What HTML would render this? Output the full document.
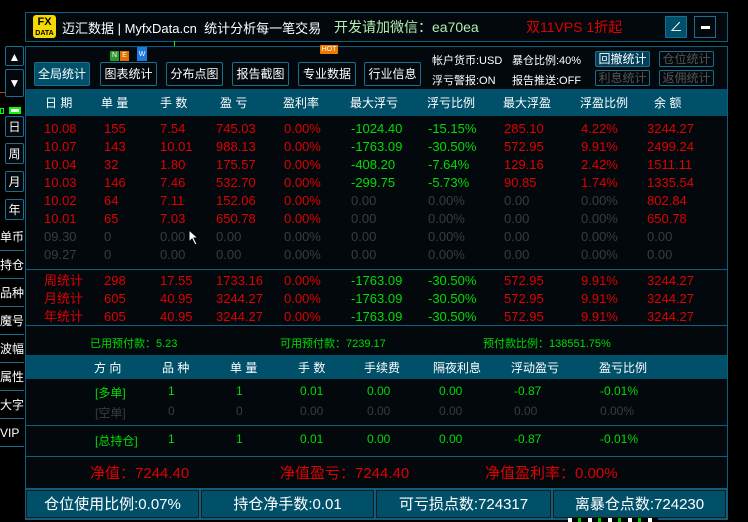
<!DOCTYPE html>
<html><head><meta charset="utf-8"><style>
*{margin:0;padding:0;box-sizing:border-box}
body{width:748px;height:522px;background:#000;position:relative;overflow:hidden;font-family:"Liberation Sans","Noto Sans CJK SC",sans-serif;color:#fff}
.a{position:absolute;white-space:nowrap}
.box{position:absolute;border:1px solid #0d5f80}
.btn{position:absolute;border:1px solid #1a6e8e;border-radius:2px;color:#fff;font-size:12px;text-align:center;line-height:22px;background:#02080c}
.r{color:#e00000}.g{color:#00dd00}.k{color:#3c3c3c}
table{border-collapse:collapse}
.t td{height:18px;line-height:18px;padding:0}
.lb{position:absolute;left:0;width:24px;font-size:12px;color:#fff;text-align:left;border-bottom:1px solid #1a6e8e;height:27px;line-height:26px}
.lbx{position:absolute;left:5px;width:19px;height:21px;border:1px solid #1a6e8e;border-radius:2px;background:#02080c;font-size:12px;text-align:center;line-height:20px}
.bb{position:absolute;top:490px;height:28px;background:#00506a;border:1px solid #1a1a1a;outline:1px solid #0d5f80;font-size:15px;line-height:27px;text-align:center}
</style></head><body>
<div class="a" style="left:0;top:92px;width:24px;height:1px;background:#d04000"></div>
<div class="a" style="left:0;top:108px;width:4px;height:6px;border:1px solid #0f0"></div>
<div class="a" style="left:9px;top:107px;width:12px;height:7px;border:2px solid #0f0;background:#fff"></div>

<div class="box" style="left:25px;top:12px;width:703px;height:30px;background:#02080c"></div>
<div class="a" style="left:33px;top:15px;width:23px;height:23px;background:#f5d800;border-radius:3px;color:#000;font-weight:bold;font-size:11px;line-height:10px;text-align:center;padding-top:2px">FX<br><span style="font-size:7px">DATA</span></div>
<div class="a" style="left:62px;top:18px;font-size:13px">迈汇数据 | MyfxData.cn&nbsp; 统计分析每一笔交易</div>
<div class="a" style="left:334px;top:17px;font-size:14px;color:#b0f0b0">开发请加微信：ea70ea</div>
<div class="a" style="left:526px;top:17px;font-size:14px;color:#e00000">双11VPS 1折起</div>
<div class="a" style="left:665px;top:16px;width:22px;height:22px;border:1px solid #1a6e8e;background:#00506a;color:#fff;font-size:13px;text-align:center;line-height:20px">∠</div>
<div class="a" style="left:694px;top:16px;width:22px;height:22px;border:1px solid #1a6e8e;background:#02080c"><div style="position:absolute;left:6px;top:9px;width:9px;height:3px;background:#fff"></div></div>
<div class="a" style="left:174px;top:41px;width:1px;height:5px;background:#0f0"></div>

<div class="box" style="left:25px;top:46px;width:703px;height:474px;background:#02080c"></div>
<div class="btn" style="left:34px;top:62px;width:56px;height:24px;background:#00506a">全局统计</div>
<div class="btn" style="left:100px;top:62px;width:57px;height:24px">图表统计</div>
<div class="btn" style="left:166px;top:62px;width:57px;height:24px">分布点图</div>
<div class="btn" style="left:232px;top:62px;width:57px;height:24px">报告截图</div>
<div class="btn" style="left:298px;top:62px;width:58px;height:24px">专业数据</div>
<div class="btn" style="left:364px;top:62px;width:57px;height:24px">行业信息</div>
<div class="a" style="left:110px;top:51px;width:9px;height:10px;background:#2a9a2a;font-size:7px;text-align:center;line-height:10px">N</div>
<div class="a" style="left:120px;top:51px;width:9px;height:10px;background:#e07000;font-size:7px;text-align:center;line-height:10px">E</div>
<div class="a" style="left:137px;top:47px;width:10px;height:14px;background:#1a7ae0;font-size:7px;text-align:center;line-height:16px">W</div>
<div class="a" style="left:320px;top:45px;width:18px;height:9px;background:#f07800;font-size:7px;text-align:center;line-height:9px;border-radius:1px">HOT</div>
<div class="a" style="left:432px;top:52px;font-size:11px">帐户货币:USD</div>
<div class="a" style="left:512px;top:52px;font-size:11px">暴仓比例:40%</div>
<div class="a" style="left:432px;top:72px;font-size:11px">浮亏警报:ON</div>
<div class="a" style="left:512px;top:72px;font-size:11px">报告推送:OFF</div>
<div class="btn" style="left:595px;top:51px;width:55px;height:16px;line-height:14px;background:#00405a">回撤统计</div>
<div class="btn" style="left:659px;top:51px;width:55px;height:16px;line-height:14px;color:#555">仓位统计</div>
<div class="btn" style="left:595px;top:70px;width:55px;height:16px;line-height:14px;color:#555">利息统计</div>
<div class="btn" style="left:659px;top:70px;width:55px;height:16px;line-height:14px;color:#555">返佣统计</div>

<div class="a" style="left:26px;top:89px;width:701px;height:27px;background:#00506a"></div>
<div class="a" style="top:94px;left:45px;font-size:12px">日 期</div>
<div class="a" style="top:94px;left:101px;font-size:12px">单 量</div>
<div class="a" style="top:94px;left:160px;font-size:12px">手 数</div>
<div class="a" style="top:94px;left:220px;font-size:12px">盈 亏</div>
<div class="a" style="top:94px;left:283px;font-size:12px">盈利率</div>
<div class="a" style="top:94px;left:350px;font-size:12px">最大浮亏</div>
<div class="a" style="top:94px;left:427px;font-size:12px">浮亏比例</div>
<div class="a" style="top:94px;left:503px;font-size:12px">最大浮盈</div>
<div class="a" style="top:94px;left:580px;font-size:12px">浮盈比例</div>
<div class="a" style="top:94px;left:654px;font-size:12px">余 额</div>

<div class="a" style="left:44px;top:120px">
<table class="t" style="font-size:13px">
<colgroup><col style="width:60px"><col style="width:56px"><col style="width:56px"><col style="width:68px"><col style="width:67px"><col style="width:77px"><col style="width:76px"><col style="width:77px"><col style="width:66px"><col style="width:60px"></colgroup>
<tr class="r"><td>10.08</td><td>155</td><td>7.54</td><td>745.03</td><td>0.00%</td><td class="g">-1024.40</td><td class="g">-15.15%</td><td>285.10</td><td>4.22%</td><td>3244.27</td></tr>
<tr class="r"><td>10.07</td><td>143</td><td>10.01</td><td>988.13</td><td>0.00%</td><td class="g">-1763.09</td><td class="g">-30.50%</td><td>572.95</td><td>9.91%</td><td>2499.24</td></tr>
<tr class="r"><td>10.04</td><td>32</td><td>1.80</td><td>175.57</td><td>0.00%</td><td class="g">-408.20</td><td class="g">-7.64%</td><td>129.16</td><td>2.42%</td><td>1511.11</td></tr>
<tr class="r"><td>10.03</td><td>146</td><td>7.46</td><td>532.70</td><td>0.00%</td><td class="g">-299.75</td><td class="g">-5.73%</td><td>90.85</td><td>1.74%</td><td>1335.54</td></tr>
<tr class="r"><td>10.02</td><td>64</td><td>7.11</td><td>152.06</td><td>0.00%</td><td class="k">0.00</td><td class="k">0.00%</td><td class="k">0.00</td><td class="k">0.00%</td><td>802.84</td></tr>
<tr class="r"><td>10.01</td><td>65</td><td>7.03</td><td>650.78</td><td>0.00%</td><td class="k">0.00</td><td class="k">0.00%</td><td class="k">0.00</td><td class="k">0.00%</td><td>650.78</td></tr>
<tr class="k"><td>09.30</td><td>0</td><td>0.00</td><td>0.00</td><td>0.00%</td><td>0.00</td><td>0.00%</td><td>0.00</td><td>0.00%</td><td>0.00</td></tr>
<tr class="k"><td>09.27</td><td>0</td><td>0.00</td><td>0.00</td><td>0.00%</td><td>0.00</td><td>0.00%</td><td>0.00</td><td>0.00%</td><td>0.00</td></tr>
</table></div>
<div class="a" style="left:26px;top:269px;width:701px;height:1px;background:#0d5f80"></div>
<div class="a" style="left:44px;top:272px">
<table class="t" style="font-size:13px">
<colgroup><col style="width:60px"><col style="width:56px"><col style="width:56px"><col style="width:68px"><col style="width:67px"><col style="width:77px"><col style="width:76px"><col style="width:77px"><col style="width:66px"><col style="width:60px"></colgroup>
<tr class="r"><td>周统计</td><td>298</td><td>17.55</td><td>1733.16</td><td>0.00%</td><td class="g">-1763.09</td><td class="g">-30.50%</td><td>572.95</td><td>9.91%</td><td>3244.27</td></tr>
<tr class="r"><td>月统计</td><td>605</td><td>40.95</td><td>3244.27</td><td>0.00%</td><td class="g">-1763.09</td><td class="g">-30.50%</td><td>572.95</td><td>9.91%</td><td>3244.27</td></tr>
<tr class="r"><td>年统计</td><td>605</td><td>40.95</td><td>3244.27</td><td>0.00%</td><td class="g">-1763.09</td><td class="g">-30.50%</td><td>572.95</td><td>9.91%</td><td>3244.27</td></tr>
</table></div>
<div class="a" style="left:26px;top:325px;width:701px;height:1px;background:#0d5f80"></div>
<svg class="a" style="left:188px;top:229px" width="12" height="17"><path d="M1 1 L1 13 L4 10 L7 16 L9 15 L6 9 L10 9 Z" fill="#fff" stroke="#000" stroke-width="1"/></svg>

<div class="a g" style="left:90px;top:335px;font-size:11px">已用预付款：5.23</div>
<div class="a g" style="left:280px;top:335px;font-size:11px">可用预付款：7239.17</div>
<div class="a g" style="left:483px;top:335px;font-size:11px">预付款比例：138551.75%</div>

<div class="a" style="left:26px;top:355px;width:701px;height:24px;background:#00506a"></div>
<div class="a" style="top:359px;left:94px;font-size:12px">方 向</div>
<div class="a" style="top:359px;left:162px;font-size:12px">品 种</div>
<div class="a" style="top:359px;left:230px;font-size:12px">单 量</div>
<div class="a" style="top:359px;left:298px;font-size:12px">手 数</div>
<div class="a" style="top:359px;left:364px;font-size:12px">手续费</div>
<div class="a" style="top:359px;left:433px;font-size:12px">隔夜利息</div>
<div class="a" style="top:359px;left:511px;font-size:12px">浮动盈亏</div>
<div class="a" style="top:359px;left:599px;font-size:12px">盈亏比例</div>

<div class="g" style="font-size:12px">
<div class="a" style="top:384px;left:95px">[多单]</div><div class="a" style="top:384px;left:168px">1</div><div class="a" style="top:384px;left:236px">1</div><div class="a" style="top:384px;left:300px">0.01</div><div class="a" style="top:384px;left:367px">0.00</div><div class="a" style="top:384px;left:439px">0.00</div><div class="a" style="top:384px;left:514px">-0.87</div><div class="a" style="top:384px;left:600px">-0.01%</div>
</div>
<div class="k" style="font-size:12px">
<div class="a" style="top:404px;left:95px">[空单]</div><div class="a" style="top:404px;left:168px">0</div><div class="a" style="top:404px;left:236px">0</div><div class="a" style="top:404px;left:300px">0.00</div><div class="a" style="top:404px;left:367px">0.00</div><div class="a" style="top:404px;left:439px">0.00</div><div class="a" style="top:404px;left:514px">0.00</div><div class="a" style="top:404px;left:600px">0.00%</div>
</div>
<div class="a" style="left:26px;top:425px;width:701px;height:1px;background:#0d5f80"></div>
<div class="g" style="font-size:12px">
<div class="a" style="top:432px;left:95px">[总持仓]</div><div class="a" style="top:432px;left:168px">1</div><div class="a" style="top:432px;left:236px">1</div><div class="a" style="top:432px;left:300px">0.01</div><div class="a" style="top:432px;left:367px">0.00</div><div class="a" style="top:432px;left:439px">0.00</div><div class="a" style="top:432px;left:514px">-0.87</div><div class="a" style="top:432px;left:600px">-0.01%</div>
</div>
<div class="a" style="left:26px;top:456px;width:701px;height:1px;background:#0d5f80"></div>
<div class="a r" style="left:90px;top:462px;font-size:15px">净值：7244.40</div>
<div class="a r" style="left:280px;top:462px;font-size:15px">净值盈亏：7244.40</div>
<div class="a r" style="left:485px;top:462px;font-size:15px">净值盈利率：0.00%</div>
<div class="a" style="left:26px;top:488px;width:701px;height:1px;background:#0d5f80"></div>

<div class="bb" style="left:26px;width:173px">仓位使用比例:0.07%</div>
<div class="bb" style="left:201px;width:173px">持仓净手数:0.01</div>
<div class="bb" style="left:376px;width:175px">可亏损点数:724317</div>
<div class="bb" style="left:553px;width:173px">离暴仓点数:724230</div>
<div class="a" style="left:568px;top:518px;width:90px;height:4px;background:repeating-linear-gradient(90deg,#fff 0 4px,#000 4px 10px,#0c0 10px 13px,#000 13px 20px)"></div>

<div class="lbx" style="top:46px;height:20px">▲</div>
<div class="lbx" style="top:69px;height:28px;line-height:26px">▼</div>
<div class="lbx" style="top:116px">日</div>
<div class="lbx" style="top:143px">周</div>
<div class="lbx" style="top:171px">月</div>
<div class="lbx" style="top:199px">年</div>
<div class="lb" style="top:224px">单币</div>
<div class="lb" style="top:252px">持仓</div>
<div class="lb" style="top:280px">品种</div>
<div class="lb" style="top:308px">魔号</div>
<div class="lb" style="top:336px">波幅</div>
<div class="lb" style="top:364px">属性</div>
<div class="lb" style="top:392px">大字</div>
<div class="lb" style="top:420px">VIP</div>
</body></html>
